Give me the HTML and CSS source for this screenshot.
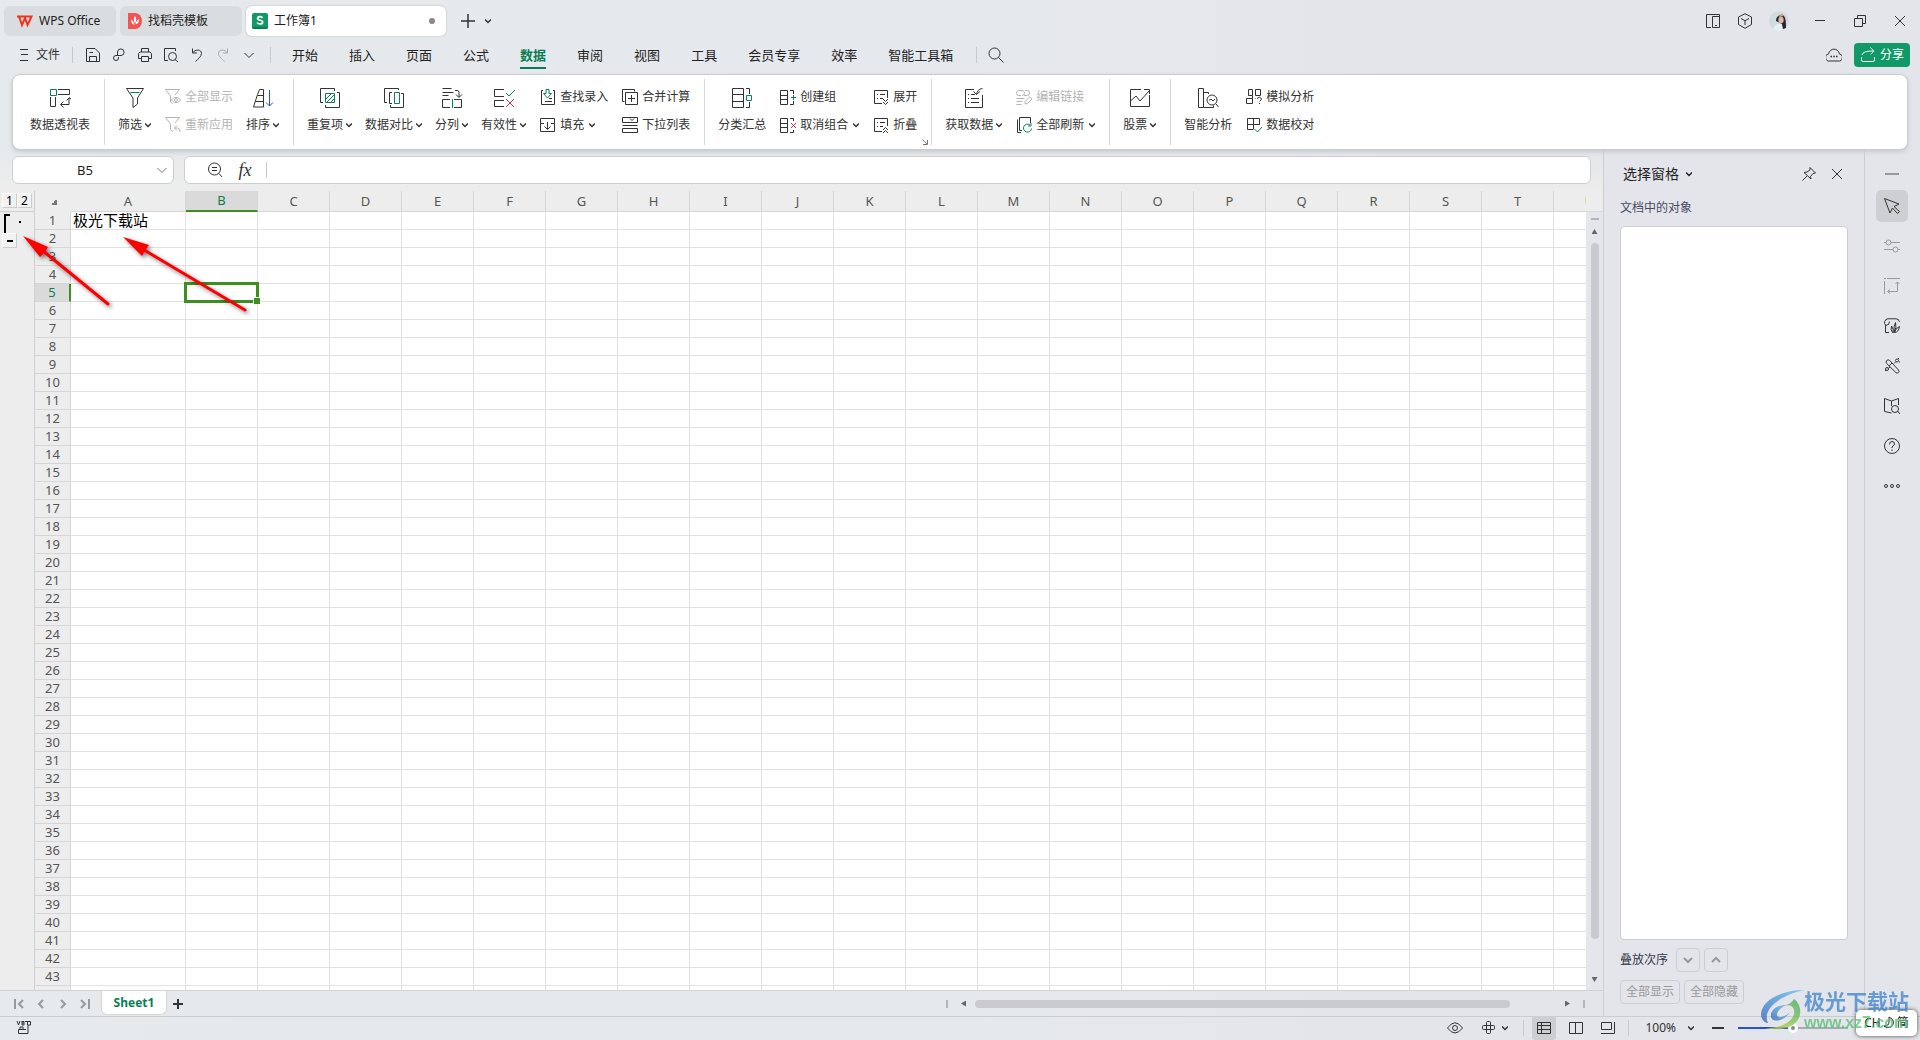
FILE: index.html
```html
<!DOCTYPE html>
<html lang="zh-CN">
<head>
<meta charset="utf-8">
<title>工作簿1 - WPS Office</title>
<link rel="stylesheet" href="styles.css">
</head>
<body>
<header class="titlebar">
  <button class="tab tab-home"><svg class="i16" viewBox="0 0 16 16"><path d="M0 3.500H12M2 3.500L5 12L8 5L10.500 12L14.500 3.500H12" fill="none" stroke="#f0331f" stroke-width="2"/></svg>WPS Office</button>
  <button class="tab tab-docer"><svg class="i16" viewBox="0 0 16 16"><path d="M1 0h7a7 8 0 0 1 0 16H1z" fill="#f05454"/><path d="M4 6.500c2 1 3 3 3.500 5C5 11.500 4 9 4 6.500zM8 3c1.500 2 1.500 5 0 7.500C6.500 8 6.500 5 8 3zM12 6c0 3-1 5-3.500 5.500C8.800 9 10 7 12 6z" fill="#fff"/></svg>找稻壳模板</button>
  <button class="tab tab-active"><svg class="i16" viewBox="0 0 16 16"><rect width="16" height="16" rx="2" fill="#119a68"/><path d="M0 14h16v0a2 2 0 0 1-2 2H2a2 2 0 0 1-2-2z" fill="#0b7a50"/><path d="M10.500 5C10 4 9 3.700 8 3.700 6.500 3.700 5.600 4.500 5.600 5.500 5.600 8 10.700 6.500 10.700 9 10.700 10.300 9.500 11 8 11 6.700 11 5.600 10.500 5.200 9.500" fill="none" stroke="#fff" stroke-width="1.700"/></svg>工作簿1<span class="dot"></span></button>
  <button class="plain new-tab" aria-label="新建"><svg class="i16" viewBox="0 0 16 16"><path d="M8 1v14M1 8h14" class="s" stroke-width="1.500"/></svg></button>
  <button class="plain" aria-label="标签列表"><svg class="caret" viewBox="0 0 6 6"><path d="M0 1.500L3 4.500L6 1.500" class="s"/></svg></button>
  <div class="window-tools">
    <button class="plain" aria-label="布局"><svg class="i16" viewBox="0 0 16 16"><path d="M6 14.500H1.500V1.500H14.500V3.500M7.500 3.500H14.500V14.500H7.500zM10 12.500h2" class="s"/></svg></button>
    <button class="plain" aria-label="应用"><svg class="i16" viewBox="0 0 16 16"><path d="M8 .7L14.500 4v7.500L8 15.300L1.500 11.500V4zM4 5.500L8 7.700L12 5.500M8 7.700V12" class="s"/></svg></button>
    <button class="plain" aria-label="账户"><svg class="avatar" viewBox="0 0 20 20"><circle cx="10" cy="10" r="10" fill="#cfdbe0"/><path d="M4 18C6 13 9 12 12 13l2 6a10 10 0 0 1-10-1z" fill="#e4f0f1"/><path d="M7 10C7 5 11 3 14 4c3 2 3 8 3 13l-3 1-1-5z" fill="#27222c"/><ellipse cx="12" cy="9" rx="2.700" ry="3.300" fill="#dcb5ac"/><path d="M9 5l4-2 2 2-4 1z" fill="#d29a70"/></svg></button>
    <button class="plain win" aria-label="最小化"><svg class="i16" viewBox="0 0 16 16"><path d="M3 7.500h10" class="s"/></svg></button>
    <button class="plain win" aria-label="还原"><svg class="i16" viewBox="0 0 16 16"><path d="M2.500 5.500h8v8h-8zM5.500 5V2.500h8v8H11" class="s"/></svg></button>
    <button class="plain win" aria-label="关闭"><svg class="i16" viewBox="0 0 16 16"><path d="M3 3l10 10M13 3L3 13" class="s"/></svg></button>
  </div>
</header>

<nav class="menubar">
  <button class="plain file"><svg class="i10" viewBox="0 0 10 12"><path d="M1 .5h8M2 5.500h7M1 11.500h8" class="s"/></svg>文件</button>
  <span class="rule"></span>
  <div class="quick">
    <button class="plain" aria-label="保存"><svg class="i16" viewBox="0 0 16 16"><path d="M1.500 1.500H10L14.500 6V14.500H1.500zM4.500 14V9.500H11.500V14M4.500 5.500H8" class="s"/></svg></button>
    <button class="plain" aria-label="链接"><svg class="i16" viewBox="0 0 16 16"><path d="M6.500 8V5A3.300 3.300 0 1 1 10 8.500H5A2.500 2.500 0 1 0 7.500 11V10" class="s"/></svg></button>
    <button class="plain" aria-label="打印"><svg class="i16" viewBox="0 0 16 16"><path d="M4.500 5V1.500h7V5M4 11.500H1.500V6.500L3 5h10l1.500 1.500v5H12M4.500 9.500h7v5h-7z" class="s"/></svg></button>
    <button class="plain" aria-label="打印预览"><svg class="i16" viewBox="0 0 16 16"><path d="M5 13.500H1.500V1.500h11V4M12 12.500l3 2.500" class="s"/><circle cx="9.500" cy="9.500" r="4" class="s"/></svg></button>
    <button class="plain" aria-label="撤销"><svg class="i16" viewBox="0 0 16 16"><path d="M3.500 1.500V6H8M3.500 6C6 2 12.500 2 12.500 6.500 12.500 9.500 9 12 6.500 14.500" class="s"/></svg></button>
    <button class="plain faded" aria-label="恢复"><svg class="i16" viewBox="0 0 16 16"><path d="M12.500 1.500V6H8M12.500 6C10 2 3.500 2 3.500 6.500 3.500 9.500 7 12 9.500 14.500" class="s"/></svg></button>
    <button class="plain" aria-label="更多"><svg class="i16" viewBox="0 0 16 16"><path d="M3.500 6L8 10.500L12.500 6" class="s"/></svg></button>
  </div>
  <span class="rule"></span>
  <div class="menus">
    <button>开始</button><button>插入</button><button>页面</button><button>公式</button><button class="current">数据</button><button>审阅</button><button>视图</button><button>工具</button><button>会员专享</button><button>效率</button><button>智能工具箱</button>
  </div>
  <span class="rule"></span>
  <button class="plain search" aria-label="搜索"><svg class="i16" viewBox="0 0 16 16"><circle cx="6.500" cy="6.500" r="5.500" class="s"/><path d="M10.500 10.500L15.500 15.500" class="s"/></svg></button>
  <div class="share-tools">
    <button class="plain" aria-label="云同步"><svg class="i16" viewBox="0 0 16 16"><path d="M4 14A3.500 3.500 0 0 1 2.500 7C4 .5 12 .5 13.500 7A3.500 3.500 0 0 1 12 14z" class="s"/><path d="M4.500 9.500h1.500M7.300 9.500h1.500M10 9.500h1.500" class="s" stroke-width="1.500"/></svg></button>
    <button class="share"><svg class="i16" viewBox="0 0 16 16"><path d="M1.500 10v3q0 1.500 1.500 1.500h10q1.500 0 1.500-1.500v-3M2 8C3 5 6 4 14 4M10.500 .5L14 4L10.500 7.500" class="s"/></svg>分享</button>
  </div>
</nav>

<section class="ribbon">
  <div class="group">
    <button class="big"><svg viewBox="0 0 22 22"><path d="M9 2.500h11.500v5H9M1.500 10v9.500h5V10M12 17.500h8V11M14.500 14.500L11.500 17.500L14.500 20.500M17.500 13.500L20.500 10.500L22 12.500" class="s"/><path d="M1.500 2.500h6v6h-6z" class="g"/></svg><span>数据透视表</span></button>
  </div>
  <div class="group">
    <button class="big"><svg viewBox="0 0 22 22"><path d="M2.500 1.500h17M2.500 1.500L9 11v9.500L13.500 17V11L19.500 1.500" class="s"/><path d="M6.500 5.500h9" class="g"/></svg><span>筛选<svg class="caret" viewBox="0 0 6 6"><path d="M0 1.500L3 4.500L6 1.500" class="s"/></svg></span></button>
    <div class="pair">
      <button class="small" disabled><svg viewBox="0 0 16 16"><path d="M.5 .5h14L10 6M.5 .5L5.500 7v6L7.500 14.500M6.500 11C9 7.500 13 7.500 15.500 11C13 14.500 9 14.500 6.500 11z" class="s"/><circle cx="11" cy="11" r="1.500" class="s"/></svg>全部显示</button>
      <button class="small" disabled><svg viewBox="0 0 16 16"><path d="M.5 .5h14L10 6M.5 .5L5.500 7v6L8 14.500M12 8.500L9.500 11l2.500 2.500M9.500 11h3q3 0 2.500 4" class="s"/></svg>重新应用</button>
    </div>
    <button class="big"><svg viewBox="0 0 22 22"><path d="M7.500 2.500h4v17.500h-10L5.500 7.500zM5.500 8.500h6M3.500 14.500h8" class="s"/><path d="M17.500 3v16M14 15.500l3.500 3.500l3.500-3.500" class="b"/></svg><span>排序<svg class="caret" viewBox="0 0 6 6"><path d="M0 1.500L3 4.500L6 1.500" class="s"/></svg></span></button>
  </div>
  <div class="group">
    <button class="big"><svg viewBox="0 0 22 22"><path d="M4 15.500H1.500v-14h14V4M18 5.500h2.500v15h-14V18" class="s"/><path d="M6.500 6.500h9v9h-9zM7 12l5-5M8 15l7-7M12 15l3-3" class="g"/></svg><span>重复项<svg class="caret" viewBox="0 0 6 6"><path d="M0 1.500L3 4.500L6 1.500" class="s"/></svg></span></button>
    <button class="big"><svg viewBox="0 0 22 22"><path d="M4 15.500H1.500v-14h14V3M18 6.500h2.500v14h-13V18M9 5.500H6.500v11H9" class="s"/><path d="M11.500 5.500h5v11h-5z" class="g"/></svg><span>数据对比<svg class="caret" viewBox="0 0 6 6"><path d="M0 1.500L3 4.500L6 1.500" class="s"/></svg></span></button>
    <button class="big"><svg viewBox="0 0 22 22"><path d="M1.500 1.500h9M1.500 5.500h11M1.500 8.500h6M9 12.500H1.500v8H9M13 12.500h7.500v8H13M14 3.500h2q2 0 2 2V10M15 7.500L18 10.500L21 7.500" class="s"/><path d="M11.500 12v9" class="g"/></svg><span>分列<svg class="caret" viewBox="0 0 6 6"><path d="M0 1.500L3 4.500L6 1.500" class="s"/></svg></span></button>
    <button class="big"><svg viewBox="0 0 22 22"><path d="M11 2.500H1.500v7H11M11 13.500H1.500v6H11" class="s"/><path d="M13 6l3 3l6-6" class="g"/><path d="M13 12l8 8M21 12l-8 8" class="r"/></svg><span>有效性<svg class="caret" viewBox="0 0 6 6"><path d="M0 1.500L3 4.500L6 1.500" class="s"/></svg></span></button>
    <div class="pair">
      <button class="small"><svg viewBox="0 0 16 16"><path d="M3 1.500H1.500v14h13v-14H13M5 12.500h7M9 9.500h3" class="s"/><path d="M6 .5v4H3.500L7.500 9L11.500 4.500H9v-4z" class="g"/></svg>查找录入</button>
      <button class="small"><svg viewBox="0 0 16 16"><path d="M4 6.500H.5v-5h14v5H11M.5 6.500v8h14v-8M7.500 5v7M4.500 9.500l3 3l3-3" class="s"/></svg>填充<svg class="caret spaced" viewBox="0 0 6 6"><path d="M0 1.500L3 4.500L6 1.500" class="s"/></svg></button>
    </div>
    <div class="pair">
      <button class="small"><svg viewBox="0 0 16 16"><path d="M2.500 12.500h-2v-12h12v2M3.500 3.500h12v12h-12zM9.500 6v7M6 9.500h7" class="s"/></svg>合并计算</button>
      <button class="small"><svg viewBox="0 0 16 16"><path d="M.5 .5h15v5H.5zM.5 8.500h15M.5 11.500h15v4H.5zM8 1.500l2 2l2-2" class="s"/></svg>下拉列表</button>
    </div>
  </div>
  <div class="group">
    <button class="big"><svg viewBox="0 0 22 22"><path d="M1.500 1.500h11v19h-11zM1.500 7.500h11M1.500 14.500h11M15 1.500h3.500V7M15 20.500h3.500V15" class="s"/><path d="M15.500 8.500h5v5h-5z" class="g"/></svg><span>分类汇总</span></button>
    <div class="pair">
      <button class="small"><svg viewBox="0 0 16 16"><path d="M.5 1.500h7v14h-7zM.5 6.500h7M.5 10.500h7M10 1.500h3.500V5M10 15.500h3.500V12" class="s"/><path d="M11 8.500h5M13.500 6v5" class="g"/></svg>创建组</button>
      <button class="small"><svg viewBox="0 0 16 16"><path d="M.5 1.500h7v14h-7zM.5 6.500h7M.5 10.500h7M10 1.500h3.500V4M10 15.500h3.500V13" class="s"/><path d="M11 6l5 5M16 6l-5 5" class="r"/></svg>取消组合<svg class="caret spaced" viewBox="0 0 6 6"><path d="M0 1.500L3 4.500L6 1.500" class="s"/></svg></button>
    </div>
    <div class="pair">
      <button class="small"><svg viewBox="0 0 16 16"><path d="M9 14.500H1.500v-13h13V9M4 5.500h1M7 5.500h5M4 9.500h1M7 9.500h3M10 10l2.500 2.500l2.500-2.500M10 13l2.500 2.500l2.500-2.500" class="s"/></svg>展开</button>
      <button class="small"><svg viewBox="0 0 16 16"><path d="M9 14.500H1.500v-13h13V9M4 5.500h1M7 5.500h5M4 9.500h1M7 9.500h3M10 13l2.500-2.500l2.500 2.500M10 16l2.500-2.500l2.500 2.500" class="s"/></svg>折叠</button>
    </div>
    <button class="launcher" aria-label="更多选项"><svg viewBox="0 0 6 6"><path d="M.5 .5L5 5M5.500 1v4.500H1" class="s"/></svg></button>
  </div>
  <div class="group">
    <button class="big"><svg viewBox="0 0 22 22"><path d="M11 2.500H2.500v18h17V8M5 7.500h1M8 7.500h4M5 11.500h1M8 11.500h8M5 15.500h1M8 15.500h8M19.500 1.500C16 2 14 4 13.500 7.500M10.500 4.500l3 3l3.500-3" class="s"/></svg><span>获取数据<svg class="caret" viewBox="0 0 6 6"><path d="M0 1.500L3 4.500L6 1.500" class="s"/></svg></span></button>
    <div class="pair">
      <button class="small" disabled><svg viewBox="0 0 16 16"><path d="M5 6.500H3a2.500 2.500 0 0 1 0-5h3a2.500 2.500 0 0 1 0 5M8 6.500h3a2.500 2.500 0 0 0 0-5H9M.5 9.500h8M.5 12.500h6M.5 15.500h5M9 12.500L13.500 8L16 10L11.500 14.500L9 15z" class="s"/></svg>编辑链接</button>
      <button class="small"><svg viewBox="0 0 16 16"><path d="M6 13.500H3.500v-13h11V6M1.500 2.500v13H5" class="s"/><path d="M15.500 11.500a4 4 0 1 1-1.500-3.500M15 6v3h-3" class="g"/></svg>全部刷新<svg class="caret spaced" viewBox="0 0 6 6"><path d="M0 1.500L3 4.500L6 1.500" class="s"/></svg></button>
    </div>
  </div>
  <div class="group">
    <button class="big"><svg viewBox="0 0 22 22"><path d="M12 2.500H1.500v17h19V8M1.500 14L7 9L11 14L20.500 3.500M15 2.500h5.500V7" class="s"/></svg><span>股票<svg class="caret" viewBox="0 0 6 6"><path d="M0 1.500L3 4.500L6 1.500" class="s"/></svg></span></button>
  </div>
  <div class="group last">
    <button class="big"><svg viewBox="0 0 22 22"><path d="M1.500 1.500h5v19h-5zM6.500 5.500h5V7M6.500 20.500h10v-2M19 17l2.500 3" class="s"/><circle cx="15" cy="13" r="5" class="s"/><path d="M12 13.500l2-1.500l2 2l2-2" class="s"/></svg><span>智能分析</span></button>
    <div class="pair">
      <button class="small"><svg viewBox="0 0 16 16"><path d="M2.500 .5h4v6h-4zM9.500 .5h5v6h-5zM.5 9.500h6v5h-6zM6.500 6.500v3M9.500 10V9.500M11 9.500q2.500-2.500 4.500 0q0 1.500-2 3M13.500 14v1" class="s"/></svg>模拟分析</button>
      <button class="small"><svg viewBox="0 0 16 16"><path d="M7 12.500H1.500v-11h12V8M7.500 1.500v11M1.500 7.500h12" class="s"/><path d="M8.500 12l3 3L16 10" class="g"/></svg>数据校对</button>
    </div>
  </div>
</section>

<main class="workspace">
  <section class="editor">
    <div class="formula-bar">
      <div class="name-box"><input aria-label="名称框" value="B5"><svg class="i10" viewBox="0 0 10 12"><path d="M.5 4L5 8.500L9.500 4" class="s"/></svg></div>
      <div class="formula-box">
        <button class="plain" aria-label="查看公式"><svg class="i16" viewBox="0 0 16 16"><circle cx="7.500" cy="7" r="6" class="s"/><path d="M12 11.500l3 3.500M5 5.500h5M5 8.500h5" class="s"/></svg></button>
        <button class="plain fx" aria-label="插入函数"><i>fx</i></button>
        <span class="rule"></span>
        <input aria-label="编辑栏">
      </div>
    </div>
    <div class="sheet">
      <div class="outline">
        <div class="levels"><button>1</button><button>2</button></div>
        <div class="bracket"><i class="line"></i><i class="point"></i></div>
        <button class="collapse" aria-label="折叠分组"></button>
      </div>
      <div class="cells"><table id="grid"></table></div>
      <div class="vscroll"><i class="grip"></i><i class="up"></i><i class="thumb"></i><i class="down"></i></div>
      <svg class="arrows" viewBox="0 0 260 140">
        <g transform="translate(0 -191)"><path d="M108 304L45 252.500" stroke="#f00" stroke-width="3" stroke-linecap="round"/><path d="M23 236L48 247L45 252L40 257z" fill="#f00"/><path d="M245 310L145 250.500" stroke="#f00" stroke-width="3" stroke-linecap="round"/><path d="M123 237L149 245L145 250.500L142 256z" fill="#f00"/></g>
      </svg>
    </div>
    <div class="sheetbar">
      <div class="nav">
        <button class="plain" aria-label="第一个"><svg viewBox="0 0 10 10"><path d="M1 0v10M9 1L5 5l4 4" /></svg></button>
        <button class="plain" aria-label="上一个"><svg viewBox="0 0 10 10"><path d="M7 1L3 5l4 4"/></svg></button>
        <button class="plain" aria-label="下一个"><svg viewBox="0 0 10 10"><path d="M3 1l4 4l-4 4"/></svg></button>
        <button class="plain" aria-label="最后一个"><svg viewBox="0 0 10 10"><path d="M1 1l4 4l-4 4M9 0v10"/></svg></button>
      </div>
      <button class="sheet-tab">Sheet1</button>
      <button class="plain add-sheet" aria-label="新建工作表"><svg class="i10" viewBox="0 0 10 10"><path d="M5 0v10M0 5h10" class="s" stroke-width="2"/></svg></button>
      <div class="hscroll"><i class="grip"></i><i class="left"></i><span><i class="thumb"></i></span><i class="right"></i><i class="grip"></i></div>
    </div>
  </section>

  <aside class="pane">
    <div class="pane-head"><button class="plain pane-title">选择窗格<svg class="caret" viewBox="0 0 6 6"><path d="M0 1.500L3 4.500L6 1.500" class="s"/></svg></button>
      <button class="plain pin" aria-label="固定"><svg class="i16" viewBox="0 0 16 16"><path d="M9 1.500L14.500 7L12 7.500L9.500 10.500L10 13L3 6.500L6 6L9 4zM6 10L1.500 14.500" class="s"/></svg></button>
      <button class="plain" aria-label="关闭窗格"><svg class="i16" viewBox="0 0 16 16"><path d="M3 3l10 10M13 3L3 13" class="s"/></svg></button>
    </div>
    <h2>文档中的对象</h2>
    <div class="objects"></div>
    <div class="order"><span>叠放次序</span>
      <button aria-label="下移"><svg viewBox="0 0 10 10"><path d="M1 3l4 4l4-4"/></svg></button>
      <button aria-label="上移"><svg viewBox="0 0 10 10"><path d="M1 7l4-4l4 4"/></svg></button></div>
    <div class="show"><button>全部显示</button><button>全部隐藏</button></div>
  </aside>

  <aside class="rail">
    <button class="mini" aria-label="收起"></button>
    <button class="on" aria-label="选择"><svg viewBox="0 0 16 16"><path d="M.5 .5L15 6L10 8.500L15.500 13.500L13.500 15.500L8.500 10L6 15z" class="s"/></svg></button>
    <button class="off" aria-label="属性"><svg viewBox="0 0 16 16"><path d="M0 4.500h2M7 4.500h9M0 11.500h9M14 11.500h2" class="s"/><circle cx="4.500" cy="4.500" r="2.500" class="s"/><circle cx="11.500" cy="11.500" r="2.500" class="s"/></svg></button>
    <button class="off" aria-label="裁剪"><svg viewBox="0 0 16 16"><path d="M.5 3v13M3 .5h13M0 .5h2M13.500 4v9.500H4M11.500 6l2-2l2 2M6 11.500l-2.500 2l2.500 2" class="s"/></svg></button>
    <button aria-label="稻壳资源"><svg viewBox="0 0 16 16"><path d="M1.500 7v7.500H5M1.500 7Q0 5.500 .7 3.500Q1.500 .8 4 .8h8q3 0 3.500 3M1.500 7.500Q5.500 7.500 5.500 3.500M7.500 8q2.500 3 1.500 7Q6 12 7.500 8zM11.500 4.500q1.500 5-1.500 10Q9.500 8 11.500 4.500zM15.500 8.500q-4 1.500-5 6q4 0 5-6" class="s"/></svg></button>
    <button aria-label="工具"><svg viewBox="0 0 16 16"><path d="M2.700 5.500a2 2 0 0 1 3-3L14.500 12a1.800 1.800 0 0 1-2.700 2.500zM5 8l3-3" class="s"/><circle cx="13" cy="2.500" r="1.500" class="s"/><circle cx="3" cy="11" r="1.500" class="s"/><path d="M11.500 4l-1.500 1.500M4.500 10L6 9M1 13l1-1M14 1l1-1M15 4l1 0" class="s"/></svg></button>
    <button aria-label="查找"><svg viewBox="0 0 16 16"><path d="M7.500 15L.5 13.500v-13L7.500 3L14.500.5V7M7.500 3v5M13.500 13l2.500 3" class="s"/><circle cx="11" cy="11" r="3.500" class="s"/></svg></button>
    <button aria-label="帮助"><svg viewBox="0 0 16 16"><circle cx="8" cy="8" r="7.500" class="s"/><path d="M5.500 6.500q0-3 2.500-3t2.500 2.500q0 1-1.500 2t-1 2M8 11.500v1.500" class="s"/></svg></button>
    <button aria-label="更多"><svg viewBox="0 0 16 16"><circle cx="2" cy="8" r="1.500" class="s"/><circle cx="8" cy="8" r="1.500" class="s"/><circle cx="14" cy="8" r="1.500" class="s"/></svg></button>
  </aside>
</main>

<footer class="statusbar">
  <button class="plain" aria-label="宏"><svg class="i16" viewBox="0 0 16 16"><path d="M1 1l1.500 4L4 1M6 1v4h2V1.500H6M6 3h2M9 1.500h5.500V5H12v8.500H2.500V9.500H10M4 9V7h3v2M11.500 2v3" class="s"/></svg></button>
  <div class="status-tools">
    <button class="plain" aria-label="护眼"><svg class="i16" viewBox="0 0 16 16"><path d="M.5 8Q8-2.500 15.500 8Q8 18 .5 8z" class="s"/><circle cx="8" cy="8" r="2.500" class="s"/></svg></button>
    <button class="plain focus" aria-label="阅读模式"><svg class="i16" viewBox="0 0 16 16"><path d="M5.500 5.500v-3q0-1 1-1h2q1 0 1 1v3M5.500 9.500v3q0 1 1 1h2q1 0 1-1v-3M5.500 5.500h-3q-1 0-1 1v2q0 1 1 1h3M9.500 5.500h3q1 0 1 1v2q0 1-1 1h-3M5.500 5.500h4v4h-4z" class="s"/></svg><svg class="caret" viewBox="0 0 6 6"><path d="M0 1.500L3 4.500L6 1.500" class="s"/></svg></button>
    <span class="rule"></span>
    <button class="view on" aria-label="普通视图"><svg class="i16" viewBox="0 0 16 16"><path d="M1.500 2.500h13v11h-13zM1.500 5.500h13M1.500 9.500h13M5.500 2.500v11" class="s"/></svg></button>
    <button class="view" aria-label="分页预览"><svg class="i16" viewBox="0 0 16 16"><path d="M1.500 2.500h13v11h-13zM7.500 2.500v11" class="s"/></svg></button>
    <button class="view" aria-label="全屏"><svg class="i16" viewBox="0 0 16 16"><path d="M1.500 2.500h10v7h-10zM14.500 2v11.500H1" class="s"/></svg></button>
    <span class="rule"></span>
    <button class="plain zoom-value">100%<svg class="caret" viewBox="0 0 6 6"><path d="M0 1.500L3 4.500L6 1.500" class="s"/></svg></button>
    <button class="plain minus" aria-label="缩小"></button>
    <input type="range" class="zoom" min="0" max="200" value="100" aria-label="缩放">
  </div>
</footer>

<div class="ime">CH<svg class="i16" viewBox="0 0 16 16"><path d="M8 2q8 4 2 10q-4 2-7-1q5 0 5-4t0-5z" class="s"/></svg>简</div>
<div class="brand">
  <svg viewBox="0 0 44 40"><defs><linearGradient id="blue" x1="0" y1="1" x2="1" y2="0"><stop offset="0" stop-color="#2f63b8"/><stop offset="1" stop-color="#5ec4ee"/></linearGradient><linearGradient id="green" x1="0" y1="1" x2="1" y2="0"><stop offset="0" stop-color="#d2dc3a"/><stop offset="1" stop-color="#38a860"/></linearGradient></defs><path d="M44 0C22 0 2 10 1 24c0 6 4 9 7 9C2 20 18 6 44 0z" fill="url(#blue)"/><path d="M28 15C14 14 8 24 12 29c4 4 14 0 18-7-5 5-12 7-13 3 0-4 5-9 11-10z" fill="url(#blue)"/><path d="M34 9c6 4 9 14 3 22C31 39 18 41 5 38c16 0 27-6 29-14 1-5-1-9-8-9 4-1 6-3 8-6z" fill="url(#green)"/></svg>
  <div><strong>极光下载站</strong><em>www.xz7.com</em></div>
</div>
<script src="grid.js"></script>
</body>
</html>
```
FILE: styles.css
```css
* { box-sizing: border-box; }
body {
  margin: 0;
  height: 100vh;
  display: flex;
  flex-direction: column;
  overflow: hidden;
  position: relative;
  background: linear-gradient(90deg, #e6eaec, #e5e8ed 50%, #e4e5ea 72%);
  color: #222;
  font: 12px/16px "Noto Sans", "Noto Sans CJK SC", sans-serif;
}
button, input { font: inherit; color: inherit; margin: 0; }
button { border: 0; padding: 0; background: none; display: flex; align-items: center; white-space: nowrap; }
svg { display: block; flex: none; fill: none; }
.s { fill: none; stroke: currentColor; }
.g { fill: none; stroke: #0d8058; }
.r { fill: none; stroke: #cf2f52; }
.b { fill: none; stroke: #2355d8; }
.i16 { width: 16px; height: 16px; }
.i10 { width: 10px; height: 12px; }
.caret { width: 6px; height: 6px; stroke-width: 1.500; }
.plain { justify-content: center; color: #333; }
.rule { width: 1px; height: 16px; background: #c6c9cd; flex: none; }

.titlebar { height: 40px; flex: none; display: flex; align-items: center; gap: 4px; padding: 2px 8px 0 4px; }
.tab { height: 30px; border-radius: 6px; background: #dadddf; gap: 5px; }
.tab-home { width: 112px; padding-left: 13px; gap: 6px; }
.tab-docer { width: 122px; padding-left: 7px; }
.tab-active { width: 200px; padding: 0 11px 0 6px; background: #fff; box-shadow: 0 0 2px #aeb2b6; gap: 6px; }
.dot { width: 6px; height: 6px; border-radius: 3px; background: #888; margin-left: auto; }
.new-tab { margin: 0 5px 0 10px; }
.window-tools { margin-left: auto; display: flex; align-items: center; gap: 16px; }
.window-tools .win { width: 24px; }
.window-tools .win:nth-child(4) { margin-left: 3px; }
.avatar { width: 20px; height: 20px; }

.menubar { height: 34px; flex: none; display: flex; align-items: center; padding: 0 10px 4px 19px; }
.file { gap: 7px; margin-right: 12px; }
.quick { display: flex; align-items: center; gap: 10px; padding: 0 13px 0 12px; }
.faded { color: #a6a9ac; }
.menus { display: flex; gap: 31px; padding: 0 23px 0 21px; font-size: 13px; }
.menus button { height: 28px; padding-top: 2px; line-height: 20px; border-bottom: 2px solid transparent; }
.menus .current { color: #0b7d54; font-weight: 700; border-color: #0b7d54; }
.search { margin-left: 11px; }
.share-tools { margin-left: auto; display: flex; align-items: center; gap: 12px; }
.share { width: 56px; height: 24px; border-radius: 4px; background: #119a68; color: #fff; justify-content: center; gap: 4px; }

.ribbon {
  height: 76px; flex: none; margin: 0 12px; padding: 0 0 0 4px; display: flex; position: relative; z-index: 1;
  background: #fff; border: 1px solid #c9ccd1; border-radius: 8px; box-shadow: 0 2px 4px #c6c9cd;
}
.group { display: flex; align-items: flex-start; gap: 13px; margin: 4px 0; padding: 8px 14px 0 13px; border-right: 1px solid #d5d7d9; position: relative; }
.group.last { border-right: 0; }
.big { flex-direction: column; gap: 8px; color: #333; }
.big > svg { width: 22px; height: 22px; }
.big span { display: flex; align-items: center; gap: 3px; }
.pair { display: flex; flex-direction: column; gap: 12px; padding-top: 2px; }
.small { gap: 4px; color: #333; }
.small > svg:first-child { width: 16px; height: 16px; margin-left: 1px; }
.small .spaced { margin-left: 1px; }
.small:disabled { color: #b4b4b4; }
.launcher { position: absolute; right: 3px; bottom: 0; color: #777; }
.launcher svg { width: 6px; height: 6px; }

.workspace { flex: 1; min-height: 0; display: flex; }
.editor { flex: 1; min-width: 0; display: flex; flex-direction: column; }
.formula-bar { flex: none; display: flex; gap: 10px; padding: 6px 12px 7px; background: linear-gradient(transparent, #ededed); }
.name-box, .formula-box { height: 28px; background: #fff; border: 1px solid #cdd0d3; border-radius: 6px; display: flex; align-items: center; }
.name-box { width: 162px; padding-right: 6px; color: #777; }
.formula-box { flex: 1; padding-left: 22px; }
.formula-bar input { border: 0; outline: 0; padding: 0; background: none; min-width: 0; flex: 1; }
.name-box input { text-align: center; font-size: 13px; color: #222; }
.fx { width: 18px; margin: 0 12px 0 13px; font: 18px/20px "Liberation Serif", serif; }
.formula-box input { padding: 0 8px; }

.sheet { flex: 1; min-height: 0; display: flex; position: relative; overflow: hidden; background: #ededed; }
.outline { width: 35px; flex: none; border-right: 1px solid #d0d0d0; }
.levels { height: 21px; padding: 2px 2px 0; display: flex; border-bottom: 1px solid #d0d0d0; }
.levels button, .collapse { width: 15px; height: 15px; background: #f2f2f2; border: 1px solid #fff; border-right-color: #ccc; border-bottom-color: #ccc; color: #000; justify-content: center; line-height: 13px; }
.bracket { height: 21px; padding: 2px 0 0 4px; display: flex; }
.bracket .line { width: 6px; border: solid #000; border-width: 2px 0 0 2px; }
.bracket .point { width: 2px; height: 2px; background: #000; margin: 7px 0 0 9px; }
.collapse { margin-left: 2px; }
.collapse::before { content: ""; width: 6px; height: 2px; background: #000; }
.cells { flex: 1; min-width: 0; overflow: hidden; background: #fff; }
table { table-layout: fixed; width: 1591px; border-collapse: separate; border-spacing: 0; }
th, td { padding: 0; height: 18px; border: solid #e2e2e2; border-width: 0 1px 1px 0; white-space: nowrap; line-height: 17px; }
th { font-size: 13px; font-weight: 400; color: #555; background: #ededed; border-color: #d6d6d6; }
thead th { height: 21px; line-height: 20px; }
thead th:first-child { border-right-color: #ededed; border-bottom-color: #ededed; }
thead th:first-child::after { content: ""; display: block; width: 6px; height: 6px; margin: 2px 0 0 16px; background: linear-gradient(135deg, transparent 50%, #777 50%); }
td { font-size: 15px; color: #000; padding-left: 2px; }
.col-row { width: 36px; }
.col-a { width: 115px; }
.col-cell { width: 72px; }
th.picked { background: #dadada; color: #0b7d54; }
thead .picked { border-bottom: 2px solid #3f8f20; line-height: 19px; }
tbody .picked { border-right: 2px solid #3f8f20; }
td.active { position: relative; }
td.active::before { content: ""; position: absolute; inset: -2px; border: 3px solid #3f8f20; }
td.active::after { content: ""; position: absolute; right: -3px; bottom: -3px; width: 6px; height: 6px; background: #3f8f20; border: solid #fff; border-width: 1px 0 0 1px; }
.vscroll { width: 17px; flex: none; margin-top: 20px; border-top: 1px solid #d8dade; background: #e5e6eb; display: flex; flex-direction: column; align-items: center; padding: 6px 0 8px; }
.grip { width: 8px; height: 2px; background: #b4b5b9; }
.up, .down { width: 6px; height: 5px; background: #666; clip-path: polygon(50% 0, 100% 100%, 0 100%); margin: 9px 0; }
.down { clip-path: polygon(0 0, 100% 0, 50% 100%); margin: 38px 0 0; }
.vscroll .thumb { flex: 1; width: 8px; border-radius: 4px; background: #cacbcf; }
.arrows { position: absolute; left: 0; top: 0; width: 260px; height: 140px; filter: drop-shadow(2px 2px 2px #0008); }

.sheetbar { height: 26px; flex: none; display: flex; border-top: 1px solid #d0d2d5; }
.nav { display: flex; align-items: center; gap: 12px; padding: 0 11px 0 14px; width: 101px; }
.nav svg, .order svg { width: 10px; height: 10px; stroke: #999; stroke-width: 2; }
.sheet-tab { width: 66px; height: 24px; justify-content: center; background: #fff; border: 1px solid #d6d8da; border-top: 0; border-radius: 0 0 6px 6px; color: #0b7d54; font-weight: 700; }
.add-sheet { margin-left: 6px; }
.hscroll { display: flex; align-items: center; width: 639px; margin: 0 18px 0 auto; }
.hscroll .grip { width: 2px; height: 8px; }
.left, .right { width: 5px; height: 6px; background: #666; clip-path: polygon(0 50%, 100% 0, 100% 100%); margin: 0 9px 0 13px; }
.right { clip-path: polygon(0 0, 100% 50%, 0 100%); margin: 0 13px 0 8px; }
.hscroll span { flex: 1; }
.hscroll .thumb { display: block; width: 92%; height: 8px; border-radius: 4px; background: #cacbcf; }

.pane { width: 261px; flex: none; border-left: 1px solid #cdced2; padding: 10px 16px 12px; display: flex; flex-direction: column; }
.pane-head { display: flex; align-items: center; gap: 12px; height: 28px; padding: 0 3px; }
.pane-title { font-size: 14px; color: #222; gap: 7px; line-height: 20px; margin-right: auto; }
h2 { margin: 12px 0 10px; font-size: 12px; font-weight: 400; color: #444c64; line-height: 16px; }
.objects { flex: 1; background: #fff; border: 1px solid #cbced6; border-radius: 4px; }
.order { display: flex; align-items: center; gap: 4px; margin: 8px 0; color: #333849; }
.order span { margin-right: 4px; }
.order button { width: 24px; height: 24px; }
.order button, .show button { justify-content: center; border: 1px solid #cccdd2; border-radius: 4px; }
.show { display: flex; gap: 4px; }
.show button { width: 60px; height: 24px; color: #999; }

.rail { width: 56px; flex: none; border-left: 1px solid #cdced2; padding: 8px 1px 0 0; display: flex; flex-direction: column; align-items: center; gap: 8px; }
.rail button { width: 32px; height: 32px; justify-content: center; border-radius: 5px; color: #333; }
.rail svg { width: 16px; height: 16px; }
.rail .on { background: #cecfd3; }
.rail .off { color: #999; }
.rail .mini { width: 14px; height: 2px; margin: 15px 0 7px; background: #999; border-radius: 0; }

.statusbar { height: 24px; flex: none; display: flex; align-items: center; border-top: 1px solid #c9ccd0; padding: 0 72px 2px 16px; }
.status-tools { margin-left: auto; display: flex; align-items: center; }
.focus { gap: 5px; margin: 0 15px 0 18px; }
.view { width: 24px; height: 24px; justify-content: center; border-radius: 3px; margin: 0 0 0 8px; color: #333; }
.view.on { background: #cdced2; }
.view + .rule { margin: 0 16px 0 8px; }
.zoom-value { gap: 12px; }
.minus { width: 12px; height: 2px; background: #333; margin: 0 14px 0 18px; }
.zoom { appearance: none; width: 110px; height: 10px; background: linear-gradient(#2550dc, #2550dc) 0 4px / 50% 2px no-repeat, linear-gradient(#aaabb0, #aaabb0) 0 4px / 100% 2px no-repeat; }
.zoom::-webkit-slider-thumb { appearance: none; width: 10px; height: 10px; border-radius: 5px; background: #888; border: 3px solid #fff; }

.brand { position: absolute; right: 11px; bottom: 8px; display: flex; align-items: center; opacity: .75; }
.brand svg { width: 44px; height: 40px; }
.brand div { display: flex; flex-direction: column; }
.brand strong { font-size: 21px; line-height: 26px; color: #3b82cc; }
.brand em { font: 700 16px/18px "Liberation Sans", sans-serif; color: #52bf70; }
.ime { position: absolute; right: 3px; bottom: 4px; width: 61px; height: 26px; display: flex; align-items: center; justify-content: center; background: #fff; border-radius: 5px; box-shadow: 0 0 4px #444; font-size: 12px; }
```
FILE: grid.js
```js
const letters = 'ABCDEFGHIJKLMNOPQRSTU'.split('');
const head = letters.map(l => `<th scope="col"${l === 'B' ? ' class="picked"' : ''}>${l}</th>`).join('');
let rows = '';
for (let r = 1; r <= 44; r++) {
  const cells = letters.map(l => {
    if (l === 'A' && r === 1) return '<td>极光下载站</td>';
    return l === 'B' && r === 5 ? '<td class="active"></td>' : '<td></td>';
  }).join('');
  rows += `<tr><th scope="row"${r === 5 ? ' class="picked"' : ''}>${r}</th>${cells}</tr>`;
}
document.getElementById('grid').innerHTML =
  '<colgroup><col class="col-row"><col class="col-a"><col class="col-cell" span="20"></colgroup>' +
  `<thead><tr><th></th>${head}</tr></thead><tbody>${rows}</tbody>`;
```
